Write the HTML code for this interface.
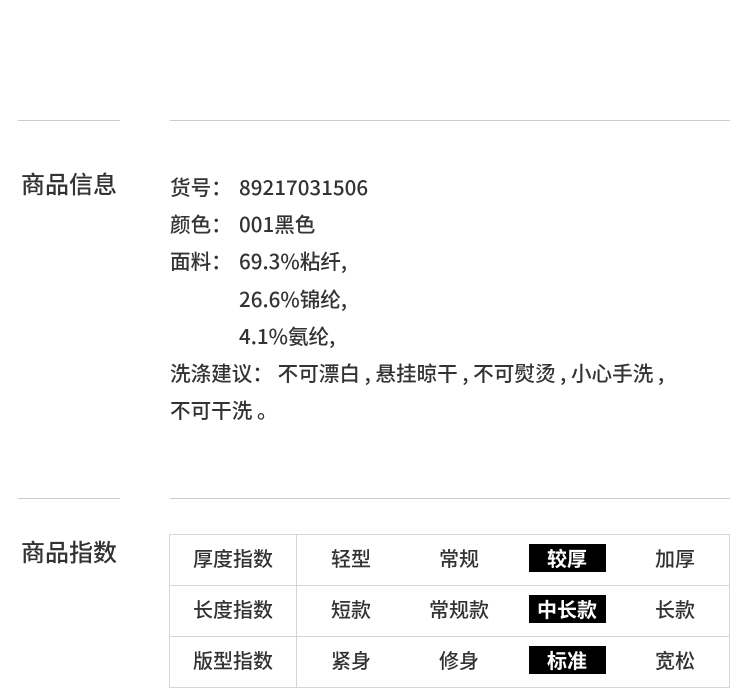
<!DOCTYPE html>
<html><head><meta charset="utf-8"><style>
body{margin:0;width:750px;height:688px;background:#fff;position:relative;overflow:hidden;font-family:"Noto Sans CJK SC","Liberation Sans",sans-serif;color:#333;font-weight:500}
.l{position:absolute;height:1px;background:#ccc}
.t{position:absolute;left:21px;font-size:24px;color:#333;line-height:30px}
.info{position:absolute;left:170px;top:168px;font-size:20.6px;line-height:37.2px}
.v{position:absolute;left:69px}
.info div{position:relative;height:37.2px;white-space:nowrap}
table{position:absolute;left:169px;top:534px;border-collapse:collapse;font-size:20px}
td{border:1px solid #d6d6d6;height:50px;padding:0;text-align:center;width:108px;line-height:24px}
td span{position:relative;top:-2px}
td.h{width:126px}
.r{border-left:none;border-right:none}
.b{display:inline-block;background:#000;color:#fff;width:77px;height:28px;line-height:28px;font-weight:bold}
</style></head><body>
<div class="l" style="left:18px;width:102px;top:120px"></div>
<div class="l" style="left:170px;width:560px;top:120px"></div>
<div class="l" style="left:18px;width:102px;top:498px"></div>
<div class="l" style="left:170px;width:560px;top:498px"></div>
<div class="t" style="top:168px">商品信息</div>
<div class="t" style="top:536px">商品指数</div>
<div class="info">
<div>货号：<span class="v">89217031506</span></div>
<div>颜色：<span class="v">001黑色</span></div>
<div>面料：<span class="v">69.3%粘纤,</span></div>
<div><span class="v">26.6%锦纶,</span></div>
<div><span class="v">4.1%氨纶,</span></div>
<div>洗涤建议：&nbsp;不可漂白 , 悬挂晾干 , 不可熨烫 , 小心手洗 ,</div>
<div>不可干洗 。</div>
</div>
<table>
<tr><td class="h"><span>厚度指数</span></td><td style="border-right:none"><span>轻型</span></td><td class="r"><span>常规</span></td><td class="r"><span class="b">较厚</span></td><td style="border-left:none"><span>加厚</span></td></tr>
<tr><td class="h"><span>长度指数</span></td><td style="border-right:none"><span>短款</span></td><td class="r"><span>常规款</span></td><td class="r"><span class="b">中长款</span></td><td style="border-left:none"><span>长款</span></td></tr>
<tr><td class="h"><span>版型指数</span></td><td style="border-right:none"><span>紧身</span></td><td class="r"><span>修身</span></td><td class="r"><span class="b">标准</span></td><td style="border-left:none"><span>宽松</span></td></tr>
</table>
</body></html>
